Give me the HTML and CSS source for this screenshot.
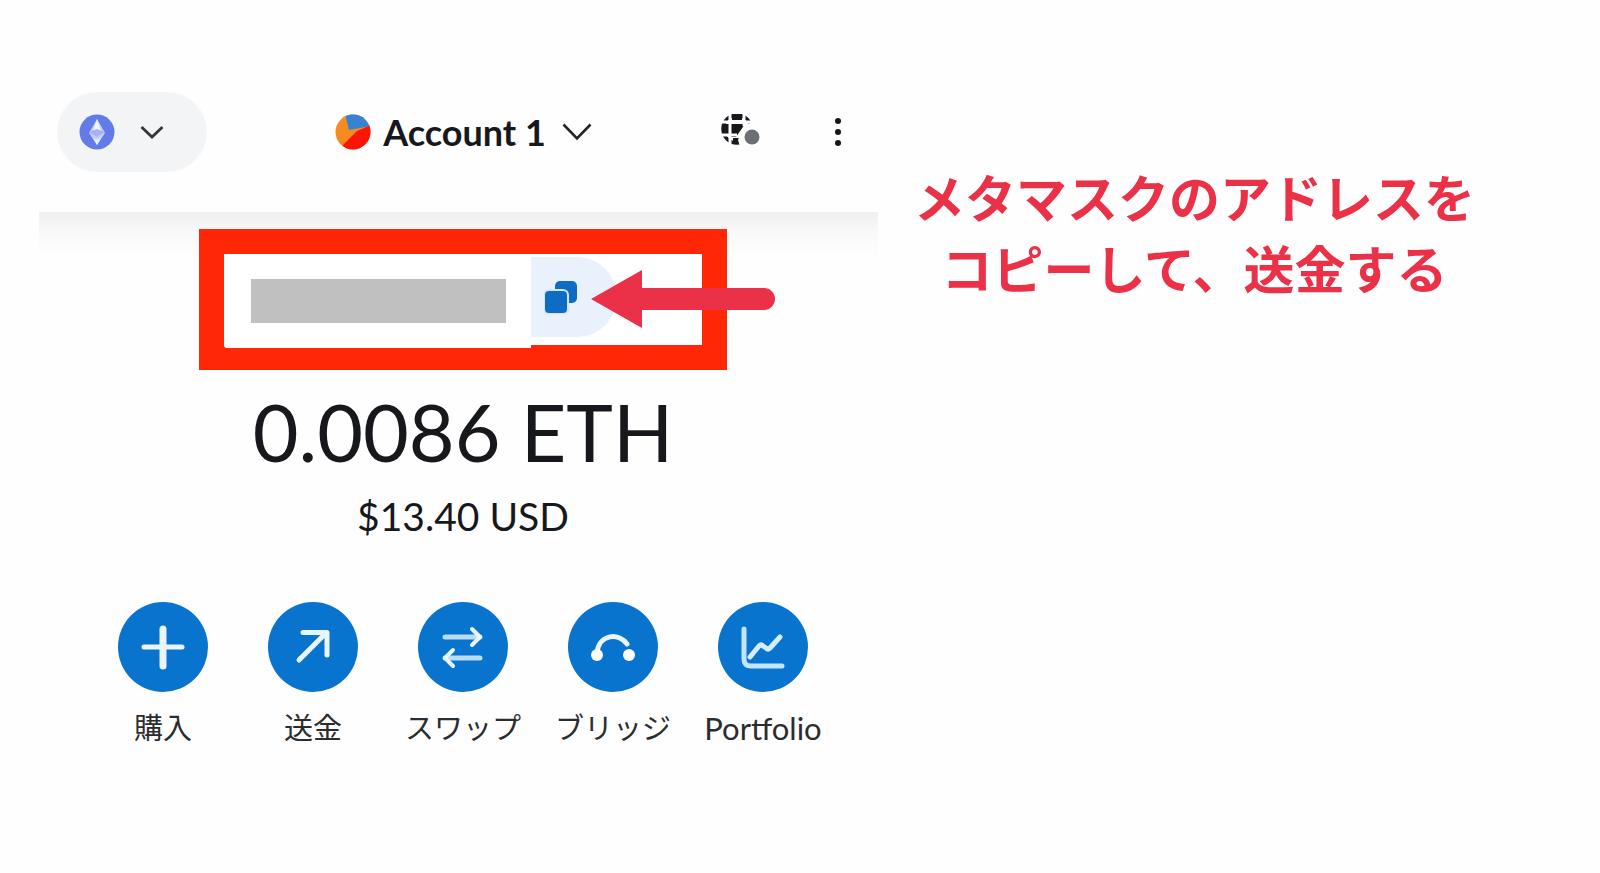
FILE: index.html
```html
<!DOCTYPE html>
<html lang="ja">
<head>
<meta charset="utf-8">
<meta name="viewport" content="width=device-width, initial-scale=1">
<title>Account 1</title>
<link rel="stylesheet" href="styles.css">
</head>
<body>
<main class="page">
  <section class="wallet">
    <header class="topbar">
      <button class="network" type="button" aria-label="Ethereum">
        <svg width="36" height="36" viewBox="0 0 36 36" aria-hidden="true">
          <circle cx="18" cy="18" r="17.5" fill="#627be6"/>
          <path d="M18 5 26 19 18 31 10 19Z" fill="#c3cffb"/>
          <path d="M18 5 22 17 18 20 14 17Z" fill="#f2f5ff"/>
          <path d="M10 18 18 15 26 18 18 23Z" fill="#a7b2f3"/>
          <path d="M14 24 18 26 22 24 18 31Z" fill="#e9eeff"/>
        </svg>
        <svg width="24" height="14" viewBox="0 0 24 14" fill="none" stroke="#35373b" stroke-width="2.8" aria-hidden="true"><path d="m1.500 2 10.500 10 10.500-10"/></svg>
      </button>
      <button class="account" type="button">
        <svg width="36" height="36" viewBox="0 0 36 36" aria-hidden="true">
          <clipPath id="disc"><circle cx="18" cy="18" r="17.500"/></clipPath>
          <g clip-path="url(#disc)">
            <path d="M0 0H36V36H0Z" fill="#f78b1f"/>
            <path d="M10 0H36V12L14 16Z" fill="#3783d3"/>
            <path d="M36 11 22 17 7 32V36H36Z" fill="#fa1505"/>
          </g>
        </svg>
        <span>Account 1</span>
        <svg class="account-chevron" width="30" height="18" viewBox="0 0 30 18" fill="none" stroke="#222427" stroke-width="2.600" aria-hidden="true"><path d="m1.500 1.500 13.500 14 13.500-14"/></svg>
      </button>
      <div class="tools">
        <button class="icon-button" type="button" aria-label="接続">
          <svg width="42" height="36" viewBox="0 0 42 36" aria-hidden="true">
            <circle cx="17" cy="15" r="14" fill="none" stroke="#17181b" stroke-width="3.500"/>
            <path d="M12 0H22V6H12ZM2 10H9V20H2ZM11 10H25L16 23H11ZM13 24H19V30H13Z" fill="#17181b"/>
            <path d="M0 8H34M0 21H17M10 0V34M24 0V12" fill="none" stroke="#fefefe" stroke-width="3"/>
            <path d="M24 11 34 8 42 12V36H21L18 26Z" fill="#fefefe"/>
            <circle cx="32" cy="23" r="7.500" fill="#6b6e74"/>
          </svg>
        </button>
        <button class="icon-button" type="button" aria-label="メニュー">
          <svg width="8" height="30" viewBox="0 0 8 30" fill="#141618" aria-hidden="true"><circle cx="4" cy="4" r="3"/><circle cx="4" cy="15" r="3"/><circle cx="4" cy="26" r="3"/></svg>
        </button>
      </div>
    </header>
    <div class="content">
      <div class="address">
        <div class="address-mask"><div class="address-bar"></div></div>
        <button class="copy" type="button" aria-label="コピー">
          <svg width="34" height="34" viewBox="0 0 34 34" fill="#0f6cc5" aria-hidden="true">
            <rect x="11" y="1" width="22" height="22" rx="5"/>
            <rect x="-1" y="9" width="26" height="26" rx="6" fill="#d3e6fa"/>
            <rect x="1" y="11" width="22" height="22" rx="4"/>
          </svg>
        </button>
        <svg class="pointer" width="184" height="58" viewBox="0 0 184 58" fill="#ea3147" aria-hidden="true"><path d="M0 29 51 0V18H173A11 11 0 0 1 173 40H51V58Z"/></svg>
      </div>
      <h1 class="balance">0.0086 ETH</h1>
      <p class="fiat">$13.40 USD</p>
      <nav class="actions">
        <button class="action" type="button">
          <svg class="disc" viewBox="0 0 90 90" aria-hidden="true"><path d="M45 27V64" stroke-width="7"/><path d="M26 45H64" stroke-width="5"/></svg>
          <span>購入</span>
        </button>
        <button class="action" type="button">
          <svg class="disc" viewBox="0 0 90 90" aria-hidden="true"><path d="M31 58 58 31M35 30.500H59V53"/></svg>
          <span>送金</span>
        </button>
        <button class="action" type="button">
          <svg class="disc" viewBox="0 0 90 90" aria-hidden="true"><path d="M27 35H62M27 56H62" stroke="#b9dcf8"/><path d="m54 27 8 8-8 8M35 48l-8 8 8 8" stroke-width="4"/></svg>
          <span>スワップ</span>
        </button>
        <button class="action" type="button">
          <svg class="disc" viewBox="0 0 90 90" aria-hidden="true"><path d="M29 51C31 31 52 31 59 42"/><circle cx="29" cy="53" r="6" fill="#fff" stroke="none"/><circle cx="61" cy="53" r="6" fill="#fff" stroke="none"/></svg>
          <span>ブリッジ</span>
        </button>
        <button class="action" type="button">
          <svg class="disc" viewBox="0 0 90 90" aria-hidden="true"><path d="M26 27V57Q26 64 33 64H64" stroke="#bfe5ff"/><path d="M32 55 41 44Q43 42 45 44L48 46Q50 48 52 46L62 35" stroke="#d5edff"/></svg>
          <span class="latin">Portfolio</span>
        </button>
      </nav>
    </div>
  </section>
  <p class="note">メタマスクのアドレスを<br>コピーして、送金する</p>
</main>
</body>
</html>
```
FILE: styles.css
```css
* { box-sizing: border-box; }

body {
  margin: 0;
  background: #fefefe;
  color: #16181b;
  font-family: Lato, "Noto Sans CJK JP", sans-serif;
}

button {
  padding: 0;
  border: 0;
  background: none;
  color: inherit;
  font: inherit;
  cursor: pointer;
}

svg { display: block; flex: none; }

.page {
  display: grid;
  grid-template-columns: 839fr 633fr;
  padding: 52px 89px 52px 39px;
}

.topbar {
  display: flex;
  align-items: center;
  justify-content: space-between;
  height: 160px;
  padding: 0 36px 0 18px;
}

.network {
  display: flex;
  align-items: center;
  gap: 25px;
  width: 150px;
  height: 80px;
  padding-left: 22px;
  border-radius: 40px;
  background: #f2f4f6;
}

.account {
  display: flex;
  align-items: center;
  gap: 12px;
  font-size: 36px;
  font-weight: 700;
  line-height: 40px;
}

.account-chevron { margin-left: 4px; }

.tools {
  display: flex;
  align-items: center;
  gap: 72px;
}

.content {
  padding: 17px 0 0 9px;
  background: linear-gradient(#efeff0, #f9f9f9 20px, #fefefe 48px) no-repeat;
}

.address {
  position: relative;
  display: flex;
  width: 528px;
  height: 141px;
  margin: 0 auto;
  padding: 25px;
  background: #ff2706;
}

.address::before {
  content: "";
  position: absolute;
  inset: 25px;
  background: #fff;
}

.address-mask {
  position: relative;
  width: 307px;
  height: 94px;
  padding: 25px 25px 25px 27px;
  border-bottom-left-radius: 3px;
  background: #fff;
}

.address-bar {
  height: 44px;
  background: #c0c0c0;
}

.copy {
  position: relative;
  display: flex;
  align-items: center;
  width: 86px;
  height: 80px;
  margin-top: 3px;
  padding-left: 13px;
  border-radius: 0 40px 40px 0;
  background: #e8f1fc;
}

.pointer {
  position: absolute;
  top: 41px;
  left: 392px;
}

.balance {
  margin: 14px 0 0;
  font-size: 79px;
  font-weight: 400;
  line-height: 96px;
  text-align: center;
}

.fiat {
  margin: 12px 0 0;
  font-size: 39px;
  line-height: 48px;
  text-align: center;
}

.actions {
  display: grid;
  grid-template-columns: repeat(5, 1fr);
  margin: 62px 40px 0;
}

.action {
  display: flex;
  flex-direction: column;
  align-items: center;
  gap: 14px;
  color: #2a2c2f;
  font-size: 29px;
  line-height: 44px;
  white-space: nowrap;
}

.latin { font-size: 31px; }

.disc {
  width: 90px;
  height: 90px;
  border-radius: 50%;
  background: #0874cd;
  fill: none;
  stroke: #eaf6ff;
  stroke-width: 5;
  stroke-linecap: round;
  stroke-linejoin: round;
}

.note {
  margin: 109px 0 0;
  color: #ea3147;
  font-family: "Noto Sans CJK JP", sans-serif;
  font-size: 51px;
  font-weight: 700;
  line-height: 71px;
  text-align: center;
}
```
